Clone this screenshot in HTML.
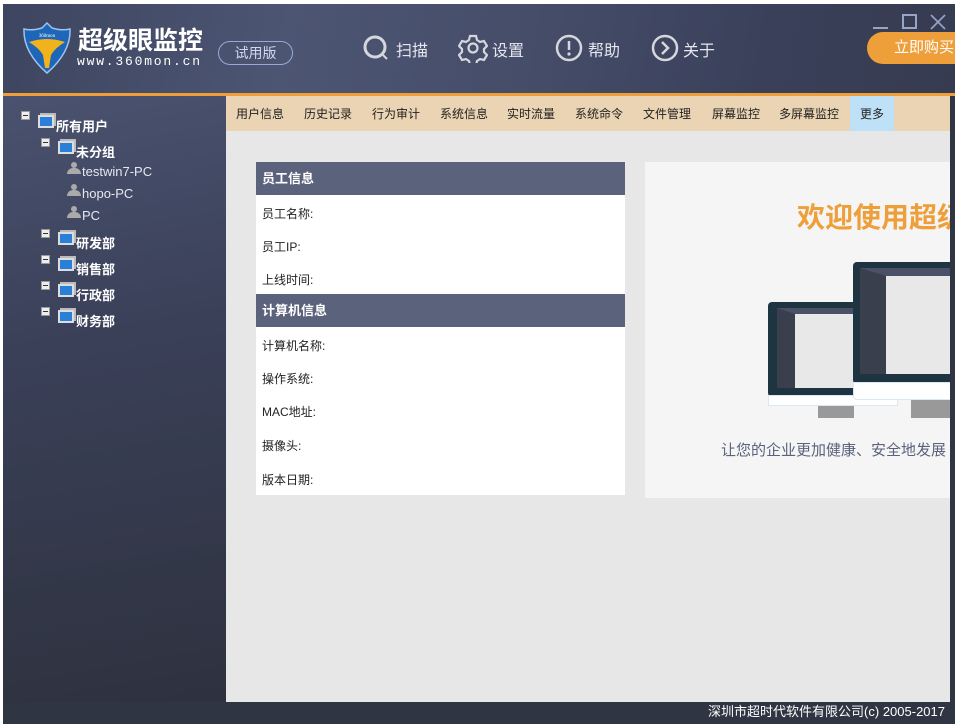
<!DOCTYPE html>
<html><head><meta charset="utf-8"><style>
*{margin:0;padding:0;box-sizing:border-box}
body{width:960px;height:724px;background:#fff;position:relative;overflow:hidden;font-family:"Liberation Sans","Noto Sans CJK SC",sans-serif;font-size:13px}
.a{position:absolute}
#hdr{left:3px;top:4px;width:952px;height:90px;background:linear-gradient(100deg,#3d4560 0%,#4c5572 30%,#454d69 55%,#3a405a 80%,#363b50 100%)}
#orl{left:3px;top:93px;width:952px;height:3px;background:#ee9f3a}
#side{left:3px;top:96px;width:223px;height:606px;background:linear-gradient(170deg,#4a526f 0%,#3a4058 40%,#2e323f 100%)}
#tabs{left:226px;top:96px;width:724px;height:35px;background:#ead4b3}
#tabs span{position:absolute;top:0;height:35px;line-height:37px;color:#222;font-size:12px}
#cont{left:226px;top:131px;width:724px;height:571px;background:#e7e7e7}
#rb{left:950px;top:96px;width:5px;height:606px;background:#2f3542}
#foot{left:3px;top:702px;width:952px;height:22px;background:#2f3542;color:#fff;font-size:13px;text-align:right;padding-right:10px;line-height:20px}
.tw{color:#fff;font-size:13px}
.nav{color:#e6e6ee;font-size:16px}
.row{position:absolute;left:6px;color:#222;font-size:12px}
.mon{position:absolute;background:#1e3440;border-radius:4px}
.mb{position:absolute;width:9px;height:9px;background:#eee;border:1px solid #999}
.mb::after{content:"";position:absolute;left:1px;top:3px;width:5px;height:1px;background:#333}
.pc{position:absolute;width:16px;height:13px;background:#2a7fd8;border:2px solid #ddd;box-shadow:2px -2px 0 #bbb}
.us{position:absolute;width:14px;height:12px}
.us::before{content:"";position:absolute;left:4px;top:0;width:6px;height:6px;border-radius:3px;background:#aaa}
.us::after{content:"";position:absolute;left:0;top:6px;width:14px;height:6px;border-radius:6px 6px 0 0;background:#aaa}
</style></head><body>
<div id="hdr" class="a"></div>
<div id="orl" class="a"></div>
<svg class="a" style="left:22px;top:22px" width="50" height="52" viewBox="0 0 50 52">
<path d="M25 1 L30 6 Q40 9 48 7 Q49 30 25 51 Q1 30 2 7 Q10 9 20 6 Z" fill="#1d66b8" stroke="#9fc3ea" stroke-width="1.5"/>
<path d="M7 20 Q25 14 43 20 Q33 26 29 33 L27 46 L23 46 L21 33 Q17 26 7 20Z" fill="#f2b21c"/>
<text x="25" y="15" font-size="5" fill="#fff" text-anchor="middle" font-family="Liberation Serif">360mon</text>
</svg>
<div class="a" style="left:78px;top:26px;color:#fff;font-size:25px;font-weight:bold;line-height:30px">超级眼监控</div>
<div class="a" style="left:77px;top:54px;color:#fff;font-size:13px;letter-spacing:1.8px;font-family:'Liberation Mono',monospace">www.360mon.cn</div>
<div class="a" style="left:218px;top:41px;width:75px;height:24px;border:1px solid #9aa8d8;border-radius:12px;color:#d0d6ee;font-size:14px;text-align:center;line-height:22px">试用版</div>
<svg class="a" style="left:362px;top:34px" width="28" height="28"><circle cx="13" cy="13" r="10" fill="none" stroke="#d6d6dc" stroke-width="3"/><line x1="21" y1="21" x2="25" y2="25" stroke="#d6d6dc" stroke-width="2"/></svg>
<div class="a nav" style="left:396px;top:37px">扫描</div>
<svg class="a" style="left:458px;top:33px" width="30" height="30" viewBox="0 0 30 30"><path d="M12 3h6l1 4 3 2 4-1 3 5-3 3v3l3 3-3 5-4-1-3 2-1 4h-6l-1-4-3-2-4 1-3-5 3-3v-3l-3-3 3-5 4 1 3-2z" fill="none" stroke="#d6d6dc" stroke-width="2.2"/><circle cx="15" cy="15" r="4.5" fill="none" stroke="#d6d6dc" stroke-width="2.2"/></svg>
<div class="a nav" style="left:492px;top:37px">设置</div>
<svg class="a" style="left:554px;top:33px" width="30" height="30"><circle cx="15" cy="15" r="12" fill="none" stroke="#d6d6dc" stroke-width="2.5"/><line x1="15" y1="8" x2="15" y2="17" stroke="#d6d6dc" stroke-width="2.5"/><circle cx="15" cy="21" r="1.6" fill="#d6d6dc"/></svg>
<div class="a nav" style="left:588px;top:37px">帮助</div>
<svg class="a" style="left:650px;top:33px" width="30" height="30"><circle cx="15" cy="15" r="12" fill="none" stroke="#d6d6dc" stroke-width="2.5"/><path d="M12 9l6 6-6 6" fill="none" stroke="#d6d6dc" stroke-width="2.5"/></svg>
<div class="a nav" style="left:683px;top:37px">关于</div>
<div class="a" style="left:873px;top:27px;width:15px;height:2px;background:#98a3c8"></div>
<div class="a" style="left:902px;top:14px;width:15px;height:15px;border:2px solid #98a3c8"></div>
<svg class="a" style="left:930px;top:14px" width="16" height="16"><path d="M1 1L15 15M15 1L1 15" stroke="#98a3c8" stroke-width="1.6"/></svg>
<div class="a" style="left:867px;top:32px;width:88px;height:32px;background:#ee9f3a;border-radius:16px 0 0 16px;color:#fff;font-size:15px;line-height:32px;padding-left:27px">立即购买</div>
<div id="side" class="a"></div>
<div id="tabs" class="a">
<span style="left:10px">用户信息</span><span style="left:78px">历史记录</span><span style="left:146px">行为审计</span><span style="left:214px">系统信息</span><span style="left:281px">实时流量</span><span style="left:349px">系统命令</span><span style="left:417px">文件管理</span><span style="left:486px">屏幕监控</span><span style="left:553px">多屏幕监控</span>
<span style="left:624px;width:44px;background:#bfe1f8;text-align:center">更多</span>
</div>
<div id="cont" class="a"></div>
<div id="rb" class="a"></div>
<div class="mb" style="left:21px;top:111px"></div>
<div class="pc" style="left:38px;top:115px"></div>
<div class="a tw" style="left:56px;top:116px;font-weight:bold">所有用户</div>
<div class="mb" style="left:41px;top:138px"></div>
<div class="pc" style="left:58px;top:141px"></div>
<div class="a tw" style="left:76px;top:142px;font-weight:bold">未分组</div>
<div class="us" style="left:67px;top:162px"></div>
<div class="a tw" style="left:82px;top:164px;color:#e6e8f0">testwin7-PC</div>
<div class="us" style="left:67px;top:184px"></div>
<div class="a tw" style="left:82px;top:186px;color:#e6e8f0">hopo-PC</div>
<div class="us" style="left:67px;top:206px"></div>
<div class="a tw" style="left:82px;top:208px;color:#e6e8f0">PC</div>
<div class="mb" style="left:41px;top:229px"></div>
<div class="pc" style="left:58px;top:232px"></div>
<div class="a tw" style="left:76px;top:233px;font-weight:bold">研发部</div>
<div class="mb" style="left:41px;top:255px"></div>
<div class="pc" style="left:58px;top:258px"></div>
<div class="a tw" style="left:76px;top:259px;font-weight:bold">销售部</div>
<div class="mb" style="left:41px;top:281px"></div>
<div class="pc" style="left:58px;top:284px"></div>
<div class="a tw" style="left:76px;top:285px;font-weight:bold">行政部</div>
<div class="mb" style="left:41px;top:307px"></div>
<div class="pc" style="left:58px;top:310px"></div>
<div class="a tw" style="left:76px;top:311px;font-weight:bold">财务部</div>
<div class="a" style="left:256px;top:162px;width:369px;height:333px;background:#fff">
<div style="position:absolute;left:0;top:0;width:369px;height:33px;background:#5b627c;color:#fff;font-weight:bold;line-height:34px;padding-left:6px">员工信息</div>
<div class="row" style="top:43px">员工名称:</div>
<div class="row" style="top:76px">员工IP:</div>
<div class="row" style="top:109px">上线时间:</div>
<div style="position:absolute;left:0;top:132px;width:369px;height:33px;background:#5b627c;color:#fff;font-weight:bold;line-height:34px;padding-left:6px">计算机信息</div>
<div class="row" style="top:175px">计算机名称:</div>
<div class="row" style="top:208px">操作系统:</div>
<div class="row" style="top:241px">MAC地址:</div>
<div class="row" style="top:275px">摄像头:</div>
<div class="row" style="top:309px">版本日期:</div>
</div>
<div class="a" style="left:645px;top:162px;width:305px;height:336px;background:#f5f5f5;overflow:hidden">
<div style="position:absolute;left:152px;top:34px;color:#ee9f3a;font-size:28px;font-weight:bold;white-space:nowrap">欢迎使用超级眼</div>
<div class="mon" style="left:123px;top:140px;width:130px;height:95px"></div>
<div style="position:absolute;left:132px;top:146px;width:115px;height:80px;background:#e8e8e8;border-left:18px solid #3a3f4e;border-top:6px solid #4a5068"></div>
<div style="position:absolute;left:123px;top:233px;width:130px;height:11px;background:#fff;border:1px solid #d8e8f4"></div>
<div style="position:absolute;left:173px;top:244px;width:36px;height:12px;background:#999"></div>
<div class="mon" style="left:208px;top:100px;width:110px;height:122px"></div>
<div style="position:absolute;left:215px;top:106px;width:100px;height:106px;background:#e8e8e8;border-left:26px solid #3a3f4e;border-top:8px solid #4a5068"></div>
<div style="position:absolute;left:208px;top:220px;width:110px;height:18px;background:#fff;border:1px solid #d8e8f4;border-radius:0 0 4px 4px"></div>
<div style="position:absolute;left:266px;top:238px;width:40px;height:18px;background:#999"></div>
<div style="position:absolute;left:76px;top:277px;color:#5b627c;font-size:15px;white-space:nowrap">让您的企业更加健康、安全地发展</div>
</div>
<div id="foot" class="a">深圳市超时代软件有限公司(c) 2005-2017</div>
</body></html>
